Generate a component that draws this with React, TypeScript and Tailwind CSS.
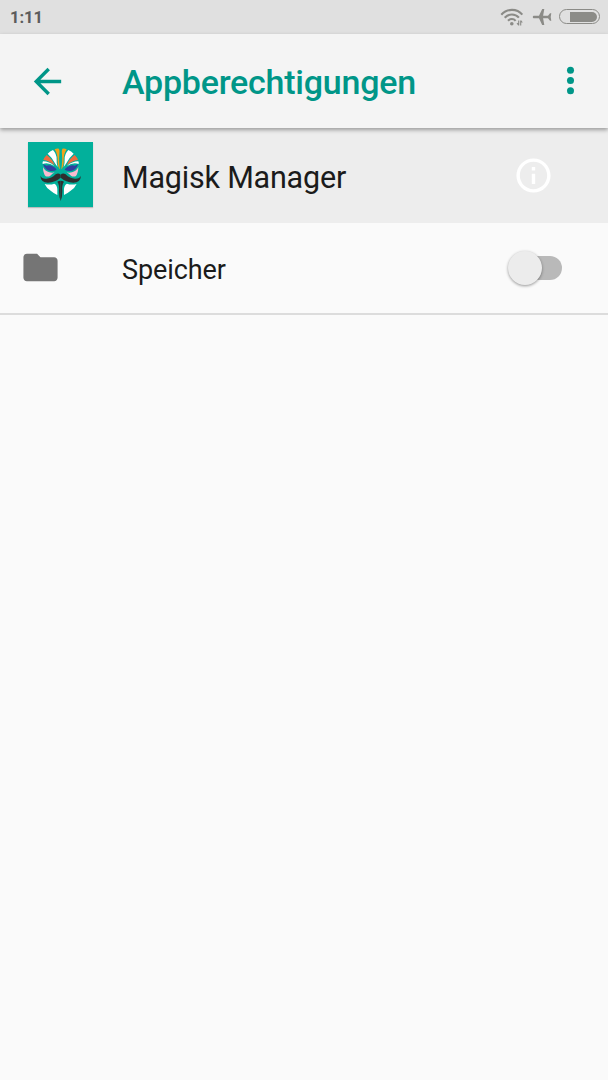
import type { ReactNode } from 'react';

function Icon({ children, className }: { children: ReactNode; className?: string }) {
  return (
    <svg viewBox="0 0 24 24" fill="currentColor" className={className} aria-hidden="true">
      {children}
    </svg>
  );
}

function StatusBar() {
  return (
    <div className="flex h-[33.5px] shrink-0 items-center justify-between bg-[#e0e0e0] pl-2.5 pr-2 text-[#5c5c5c]">
      <span className="pt-0.5 text-[16.5px] font-bold leading-none">1:11</span>
      <div className="flex items-center text-[#8b8b87]">
        <svg viewBox="0 0 24 20" className="mr-2 h-5 w-6" fill="none" stroke="currentColor" strokeWidth="2.1">
          <path d="M1.300 7.700C7 1.300 17 1.300 22.300 7.700" />
          <path d="M4.700 10.700c4-4.300 10.600-4.300 14.200 0" />
          <path d="M8 13.800c2.400-2.400 5.600-2.400 7.600 0" />
          <circle cx="11.8" cy="16.700" r="1.8" fill="currentColor" stroke="none" />
          <path strokeWidth="1.100" d="M18.700 13.500v5M17 16.200l1.700 1.900M20.700 18.500v-5M22.300 15.500l-1.600-1.900" />
        </svg>
        <svg viewBox="0 0 20 18" className="mr-[7px] h-[18px] w-5" fill="currentColor">
          <path d="M.8 9c0-.8.6-1.300 1.400-1.300h4.800L10.200 1h2.100l-1.200 6.700h4.900L18 5.300h1.300L18.700 9l.6 3.700H18l-2-2.400h-4.900l1.200 6.700h-2.100L7 10.300H2.200C1.400 10.300.8 9.800.8 9z" />
        </svg>
        <div className="flex h-[15px] w-[41px] items-center justify-end rounded-full border border-current pr-[2px]">
          <div className="h-[10px] w-[27px] rounded-r-[5px] bg-current" />
        </div>
      </div>
    </div>
  );
}

// Half of the mask is drawn once and mirrored around x = 122
function MaskHalf() {
  return (
    <>
      <path fill="#f0a31c" d="M104 43Q111 39 117 41Q120 47 118 59Q116 76 120 103Q113 96 113 80Q114 58 104 43z" />
      <path fill="#fff" d="M99 45Q90 48 83 56Q97 68 106 86L113 96Q109 82 110 72Q110 57 99 45z" />
      <path fill="#ef6c3e" d="M80 60Q72 68 70 75Q88 77 104 91Q97 72 80 60z" />
      <path fill="#fff" d="M69 79Q67 83 68 87Q85 81 103 93Q88 79 69 79z" />
      <path fill="#303f9f" d="M69 88Q71 88 79 92Q91 88 102 96Q109 101 110 104Q102 109 91 108Q76 106 69 88z" />
      <path fill="#f8bbd0" d="M69 96Q75 109 88 112Q97 114 104 112Q97 116 91 122Q86 126 77 124Q69 115 69 96z" />
      <path fill="#fff" d="M74 147Q90 151 103 146Q111 150 112 162L112 180Q101 175 93 168Q79 159 74 147z" />
      <path fill="#2f2f2f" d="M122 119Q115 112 107 118Q93 132 77 131Q65 131 61 122Q62 142 84 143Q106 142 122 128z" />
      <path fill="#2f2f2f" d="M122 137Q116 137 112 140Q119 150 117 168Q117 187 122 198z" />
    </>
  );
}

function MagiskLogo() {
  return (
    <svg viewBox="24 21 196 196" className="mb-0.5 h-[65.3px] w-[65.3px] shadow-[0_1px_1px_rgba(0,0,0,0.2)]" aria-hidden="true">
      <rect x="24" y="21" width="196" height="196" fill="#02b09b" />
      <MaskHalf />
      <g transform="matrix(-1 0 0 1 244 0)">
        <MaskHalf />
      </g>
    </svg>
  );
}

export default function App() {
  return (
    <div className="flex h-[1080px] w-[608px] flex-col overflow-hidden bg-[#fafafa] font-[Roboto,sans-serif] text-[#1b1b1b]">
      <StatusBar />

      <header className="relative flex h-[94.5px] shrink-0 items-center bg-[#f4f4f4] text-[#009688] shadow-[0_2px_4px_rgba(0,0,0,0.35)]">
        <button aria-label="Zurück" className="ml-[27px] w-[95px] pt-px">
          <Icon className="size-[41px]">
            <path d="M20 11H7.830l5.590-5.590L12 4l-8 8 8 8 1.410-1.410L7.830 13H20v-2z" />
          </Icon>
        </button>
        <h1 className="flex-1 pt-0.5 text-[34px] font-medium leading-10 tracking-[-0.23px]">Appberechtigungen</h1>
        <button aria-label="Mehr" className="mr-[17px]">
          <Icon className="size-[41px]">
            <circle cx="12" cy="6" r="2.050" />
            <circle cx="12" cy="12" r="2.050" />
            <circle cx="12" cy="18" r="2.050" />
          </Icon>
        </button>
      </header>

      <section className="flex h-[94.5px] shrink-0 items-center bg-[#ededed]">
        <div className="ml-7 w-[94px]">
          <MagiskLogo />
        </div>
        <h2 className="flex-1 pt-[5px] text-[30.5px] leading-10 tracking-[-0.2px]">Magisk Manager</h2>
        <Icon className="mr-[54px] size-[41px] text-white">
          <path d="M11 17h2v-6h-2v6zm1-15C6.480 2 2 6.480 2 12s4.480 10 10 10 10-4.480 10-10S17.520 2 12 2zm0 18c-4.410 0-8-3.590-8-8s3.590-8 8-8 8 3.590 8 8-3.590 8-8 8zM11 9h2V7h-2v2z" />
        </Icon>
      </section>

      <div className="flex h-[92.500px] shrink-0 items-center border-b-2 border-[#dcdcdc]">
        <Icon className="ml-5 mr-[61px] size-[41px] text-[#757575]">
          <path d="M10 4H4c-1.100 0-1.990.9-1.990 2L2 18c0 1.100.9 2 2 2h16c1.100 0 2-.9 2-2V8c0-1.100-.9-2-2-2h-8l-2-2z" />
        </Icon>
        <span className="flex-1 pt-1 text-[27px] leading-8 tracking-[-0.1px]">Speicher</span>
        <button role="switch" aria-checked="false" aria-label="Speicher" className="mr-[46px] flex h-6 w-12 items-center rounded-full bg-[#b9b9b9]">
          <span className="-ml-1.5 size-[34px] shrink-0 rounded-full bg-[#ececec] shadow-[0_1px_3px_rgba(0,0,0,0.4)]" />
        </button>
      </div>
    </div>
  );
}
